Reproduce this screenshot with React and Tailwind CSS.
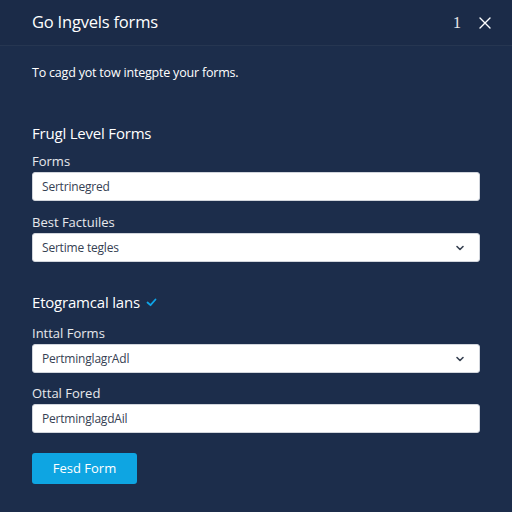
import React from 'react';

const font = { fontFamily: '"Open Sans", "Noto Sans", sans-serif' };

const Chevron = () => (
  <svg width="10" height="10" viewBox="0 0 10 10" fill="none" stroke="#374151" strokeWidth="1.6" strokeLinecap="round" strokeLinejoin="round">
    <path d="M2 3.5 L5 6.5 L8 3.5" />
  </svg>
);

const Label = ({ children, className = "" }) => (
  <div className={`text-[13px] leading-[18px] text-white/90 ${className}`}>{children}</div>
);

const Field = ({ value, select }) => (
  <div className="mt-[2px] h-[29px] bg-white rounded-[3px] border border-gray-300 flex items-center justify-between pl-[9px] pr-[14px]">
    <span className="text-[12px] tracking-[-0.2px] text-gray-700">{value}</span>
    {select && <Chevron />}
  </div>
);

export default function App() {
  return (
    <div style={font} className="w-[512px] h-[512px] bg-[#1c2d4b] text-white flex flex-col">
      {/* Header */}
      <div className="h-[46px] shrink-0 pl-8 pr-[21px] flex items-center justify-between bg-[#1b2b48] border-b border-white/5">
        <h1 className="text-[16.5px] tracking-[-0.2px] text-white">Go Ingvels forms</h1>
        <div className="flex items-center gap-[18px] text-white/90">
          <span className="text-[16px]" style={{ fontFamily: '"Liberation Serif", serif' }}>1</span>
          <svg width="12" height="12" viewBox="0 0 12 12" stroke="white" strokeWidth="1.4" strokeLinecap="round">
            <path d="M1 1 L11 11 M11 1 L1 11" />
          </svg>
        </div>
      </div>

      {/* Body */}
      <div className="px-8 pt-[17px]">
        <p className="text-[12.5px] tracking-[-0.2px] leading-[20px] text-white">To cagd yot tow integpte your forms.</p>

        <h2 className="mt-[38px] text-[15px] tracking-[-0.2px] leading-[24px] text-white">Frugl Level Forms</h2>
        <Label className="mt-[7px]">Forms</Label>
        <Field value="Sertrinegred" />

        <Label className="mt-[12px]">Best Factuiles</Label>
        <Field value="Sertime tegles" select />

        <h2 className="mt-[28px] text-[15px] tracking-[-0.2px] leading-[24px] text-white flex items-center gap-[6px]">
          Etogramcal lans
          <svg width="11" height="9" viewBox="0 0 11 9" fill="none" stroke="#0ea5e9" strokeWidth="1.8" strokeLinecap="round" strokeLinejoin="round">
            <path d="M1.5 4.5 L4.5 7.2 L9.5 1.5" />
          </svg>
        </h2>
        <Label className="mt-[10px]">Inttal Forms</Label>
        <Field value="PertminglagrAdl" select />

        <Label className="mt-[11px]">Ottal Fored</Label>
        <Field value="PertminglagdAil" />

        <button className="mt-[20px] w-[105px] h-[31px] rounded-[3px] bg-[#0ea5e2] text-white text-[13px]">
          Fesd Form
        </button>
      </div>
    </div>
  );
}
